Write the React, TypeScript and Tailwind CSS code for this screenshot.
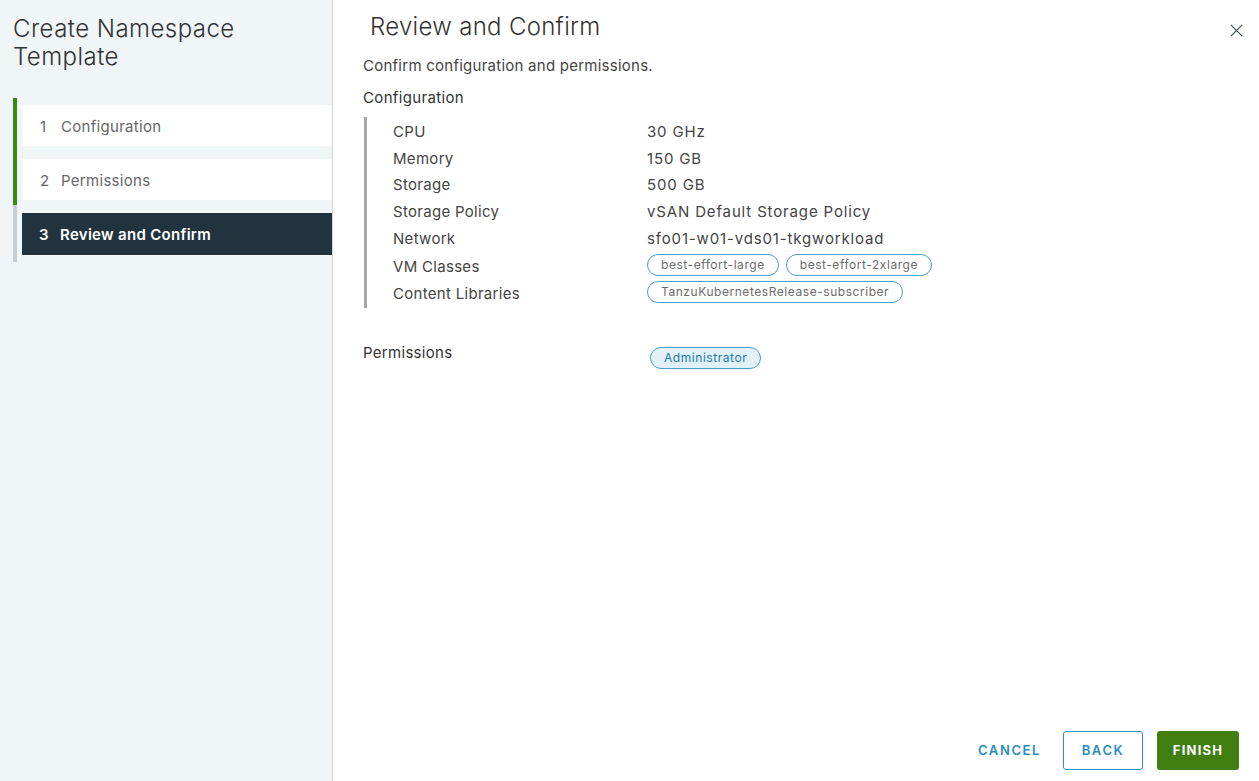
import React from 'react';

const rows = [
  { label: 'CPU', value: '30 GHz' },
  { label: 'Memory', value: '150 GB' },
  { label: 'Storage', value: '500 GB' },
  { label: 'Storage Policy', value: 'vSAN Default Storage Policy' },
  { label: 'Network', value: 'sfo01-w01-vds01-tkgworkload' },
];

function Pill({ children }: { children: React.ReactNode }) {
  return (
    <span className="inline-flex items-center h-[22px] px-[13px] rounded-full border border-[#4a9fcb] text-[12px] text-[#6b6b6b] tracking-[0.55px]">
      {children}
    </span>
  );
}

export default function App() {
  const font = { fontFamily: 'Inter, "Open Sans", sans-serif' };
  return (
    <div className="flex h-screen w-full bg-white text-[#333]" style={font}>
      {/* Sidebar */}
      <aside className="w-[333px] shrink-0 bg-[#f0f5f8] border-r border-[#cfd5d9] flex flex-col">
        <h1 className="pl-[13px] pt-[15px] text-[24px] leading-[28px] font-light tracking-[0.45px] text-[#333]">
          Create Namespace
          <br />
          Template
        </h1>
        <div className="mt-[27px] ml-[13px] flex">
          <div className="flex flex-col w-[4px]">
            <div className="h-[107px] bg-[#3c8a12]" />
            <div className="h-[57px] bg-[#c4ced4]" />
          </div>
          <div className="flex-1 pl-[5px] pt-[7px] flex flex-col gap-[13px]">
            <div className="h-[41px] bg-white flex items-center pl-[18px] pt-[3px] text-[15px] tracking-[0.3px] text-[#666]">
              <span className="w-[21px]">1</span>Configuration
            </div>
            <div className="h-[41px] bg-white flex items-center pl-[18px] pt-[3px] text-[15px] tracking-[0.3px] text-[#666]">
              <span className="w-[21px]">2</span>Permissions
            </div>
            <div className="h-[42px] bg-[#21333f] flex items-center pl-[17px] pt-[2px] text-[15px] tracking-[0.3px] font-semibold text-white">
              <span className="w-[21px]">3</span>Review and Confirm
            </div>
          </div>
        </div>
      </aside>

      {/* Main */}
      <main className="flex-1 flex flex-col relative pl-[30px] pr-[20px]">
        <button className="absolute top-[23px] right-[15px] text-[#4a5a63]">
          <svg width="15" height="15" viewBox="0 0 16 16" fill="none" stroke="currentColor" strokeWidth="1.5">
            <path d="M2 2 L14 14 M14 2 L2 14" />
          </svg>
        </button>
        <h2 className="pl-[7px] pt-[12px] text-[24px] leading-[30px] font-light tracking-[0.3px] text-[#333]">Review and Confirm</h2>
        <p className="mt-[15px] text-[15px] leading-[18px] tracking-[0.25px] text-[#444]">Confirm configuration and permissions.</p>
        <h3 className="mt-[14px] text-[15px] leading-[18px] tracking-[0.35px] text-[#333]">Configuration</h3>

        <div className="mt-[10px] ml-[1px] border-l-[3px] border-[#a6a6a6] pl-[26px] pt-[2px] pb-[2px] w-fit">
          {rows.map((r) => (
            <div key={r.label} className="flex h-[26.7px] items-center text-[15px] text-[#444]">
              <span className="w-[254px] tracking-[0.3px]">{r.label}</span>
              <span className="tracking-[0.85px]">{r.value}</span>
            </div>
          ))}
          <div className="flex h-[26px] items-center text-[15px] text-[#444]">
            <span className="w-[254px] pt-[3px] tracking-[0.3px]">VM Classes</span>
            <div className="flex gap-[7px]">
              <Pill>best-effort-large</Pill>
              <Pill>best-effort-2xlarge</Pill>
            </div>
          </div>
          <div className="flex h-[28px] items-center text-[15px] text-[#444]">
            <span className="w-[254px] pt-[4px] tracking-[0.3px]">Content Libraries</span>
            <Pill>TanzuKubernetesRelease-subscriber</Pill>
          </div>
        </div>

        <div className="mt-[28px] flex items-center text-[15px] tracking-[0.3px] text-[#333]">
          <span className="w-[287px]">Permissions</span>
          <span className="inline-flex items-center h-[22px] px-[13px] rounded-full border border-[#4a9fcb] bg-[#e1f1f6] text-[12px] text-[#1d7ab1] tracking-[0.55px] mt-[11px]">
            Administrator
          </span>
        </div>

        <div className="mt-auto mb-[11px] flex justify-end items-center gap-[14px]">
          <button className="h-[39px] pl-[8px] pr-[8px] text-[13px] font-semibold tracking-[1.6px] text-[#2a8ec0]">CANCEL</button>
          <button className="h-[39px] w-[80px] rounded-[3px] border border-[#2a8ec0] text-[13px] font-semibold tracking-[1.6px] text-[#2a8ec0]">BACK</button>
          <button className="h-[39px] w-[82px] rounded-[3px] bg-[#3f7e0f] text-[13px] font-bold tracking-[1.2px] text-white">FINISH</button>
        </div>
      </main>
    </div>
  );
}
